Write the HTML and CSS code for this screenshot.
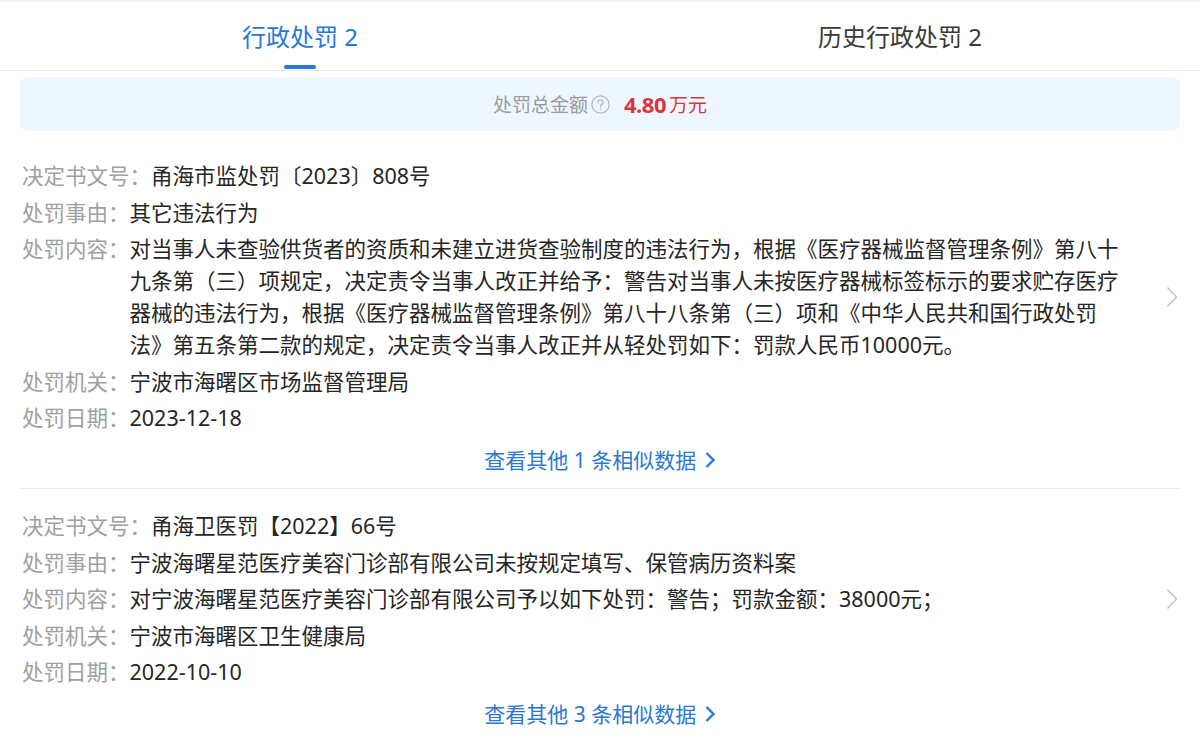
FILE: index.html
```html
<!DOCTYPE html>
<html lang="zh-CN">
<head>
<meta charset="utf-8">
<title>行政处罚</title>
<link rel="stylesheet" href="styles.css">
</head>
<body>
<div class="page">
  <div class="tabs">
    <div class="tab active"><span class="tab-text">行政处罚 2</span><span class="tab-bar"></span></div>
    <div class="tab"><span class="tab-text">历史行政处罚 2</span></div>
  </div>

  <div class="summary">
    <span class="sum-label">处罚总金额</span>
    <svg class="help" width="19" height="19" viewBox="0 0 19 19"><circle cx="9.5" cy="9.5" r="8.6" fill="none" stroke="#b4b4b4" stroke-width="1.2"/><path d="M7 7.4a2.5 2.5 0 1 1 3.6 2.2c-.8.4-1.1.9-1.1 1.7v.4" fill="none" stroke="#b4b4b4" stroke-width="1.2" stroke-linecap="round"/><circle cx="9.5" cy="14" r=".8" fill="#b4b4b4"/></svg>
    <span class="sum-num">4.80</span><span class="sum-unit">万元</span>
  </div>

  <div class="record first">
    <div class="rows">
      <div class="row"><span class="label">决定书文号：</span><span class="value">甬海市监处罚〔2023〕808号</span></div>
      <div class="row"><span class="label">处罚事由：</span><span class="value">其它违法行为</span></div>
      <div class="row"><span class="label">处罚内容：</span><span class="value">对当事人未查验供货者的资质和未建立进货查验制度的违法行为，根据《医疗器械监督管理条例》第八十九条第（三）项规定，决定责令当事人改正并给予：警告对当事人未按医疗器械标签标示的要求贮存医疗器械的违法行为，根据《医疗器械监督管理条例》第八十八条第（三）项和《中华人民共和国行政处罚法》第五条第二款的规定，决定责令当事人改正并从轻处罚如下：罚款人民币10000元。</span></div>
      <div class="row"><span class="label">处罚机关：</span><span class="value">宁波市海曙区市场监督管理局</span></div>
      <div class="row"><span class="label">处罚日期：</span><span class="value">2023-12-18</span></div>
    </div>
    <svg class="chev" width="12" height="22" viewBox="0 0 12 22"><path d="M1.5 1.5l9 9.5-9 9.5" fill="none" stroke="#c4c4c4" stroke-width="1.4"/></svg>
  </div>
  <div class="more">查看其他 1 条相似数据 <svg class="more-chev" width="12" height="18" viewBox="0 0 12 18"><path d="M2.5 2l7 7-7 7" fill="none" stroke="#2a78d2" stroke-width="2.4"/></svg></div>

  <div class="divider"></div>

  <div class="record">
    <div class="rows">
      <div class="row"><span class="label">决定书文号：</span><span class="value">甬海卫医罚【2022】66号</span></div>
      <div class="row"><span class="label">处罚事由：</span><span class="value">宁波海曙星范医疗美容门诊部有限公司未按规定填写、保管病历资料案</span></div>
      <div class="row"><span class="label">处罚内容：</span><span class="value">对宁波海曙星范医疗美容门诊部有限公司予以如下处罚：警告；罚款金额：38000元；</span></div>
      <div class="row"><span class="label">处罚机关：</span><span class="value">宁波市海曙区卫生健康局</span></div>
      <div class="row"><span class="label">处罚日期：</span><span class="value">2022-10-10</span></div>
    </div>
    <svg class="chev" width="12" height="22" viewBox="0 0 12 22"><path d="M1.5 1.5l9 9.5-9 9.5" fill="none" stroke="#c4c4c4" stroke-width="1.4"/></svg>
  </div>
  <div class="more">查看其他 3 条相似数据 <svg class="more-chev" width="12" height="18" viewBox="0 0 12 18"><path d="M2.5 2l7 7-7 7" fill="none" stroke="#2a78d2" stroke-width="2.4"/></svg></div>
</div>
</body>
</html>
```

FILE: styles.css
```css
* { box-sizing: border-box; }
html, body { margin: 0; padding: 0; background: #fff; }
body {
  font-family: "Noto Sans", "Noto Sans CJK SC", sans-serif;
  color: #262626;
}
.page { width: 1200px; border-top: 2px solid #f2f2f2; }

.tabs {
  display: flex;
  height: 69px;
  border-bottom: 1px solid #e8e8e8;
}
.tab {
  flex: 1;
  display: flex;
  flex-direction: column;
  align-items: center;
  padding-top: 18px;
  font-size: 24px;
  line-height: 34px;
  color: #3a3a3a;
}
.tab.active { color: #2a78d6; }
.tab-bar {
  margin-top: auto;
  margin-bottom: 1px;
  width: 32px;
  height: 4px;
  border-radius: 2px;
  background: #2a78d6;
}

.summary {
  margin: 6px 20px 0;
  height: 54px;
  border-radius: 8px;
  background: #eef6fe;
  display: flex;
  align-items: center;
  justify-content: center;
  color: #9a9a9a;
  font-size: 19px;
}
.help { margin: 0 14px 0 3px; }
.sum-num {
  color: #d9363c;
  font-size: 22px;
  font-weight: 700;
  letter-spacing: -0.5px;
}
.sum-unit { color: #d9363c; font-size: 19px; margin-left: 3px; }

.record {
  display: flex;
  align-items: center;
  padding: 21px 22px 0 22px;
}
.record.first { padding-top: 29px; }
.rows { flex: 1; margin-right: 42px; }
.row {
  display: flex;
  font-size: 21.5px;
  line-height: 32px;
}
.row + .row { margin-top: 4.5px; }
.label { flex: none; color: #a0a0a0; }
.value { flex: 1; color: #262626; }
.chev { flex: none; }

.more {
  margin-top: 10px;
  display: flex;
  justify-content: center;
  align-items: center;
  font-size: 21px;
  line-height: 32px;
  color: #2a78d2;
  white-space: pre;
}
.more-chev { margin-left: 2px; }

.divider {
  margin: 12px 20px 0;
  height: 1px;
  background: #e8e8e8;
}
```
